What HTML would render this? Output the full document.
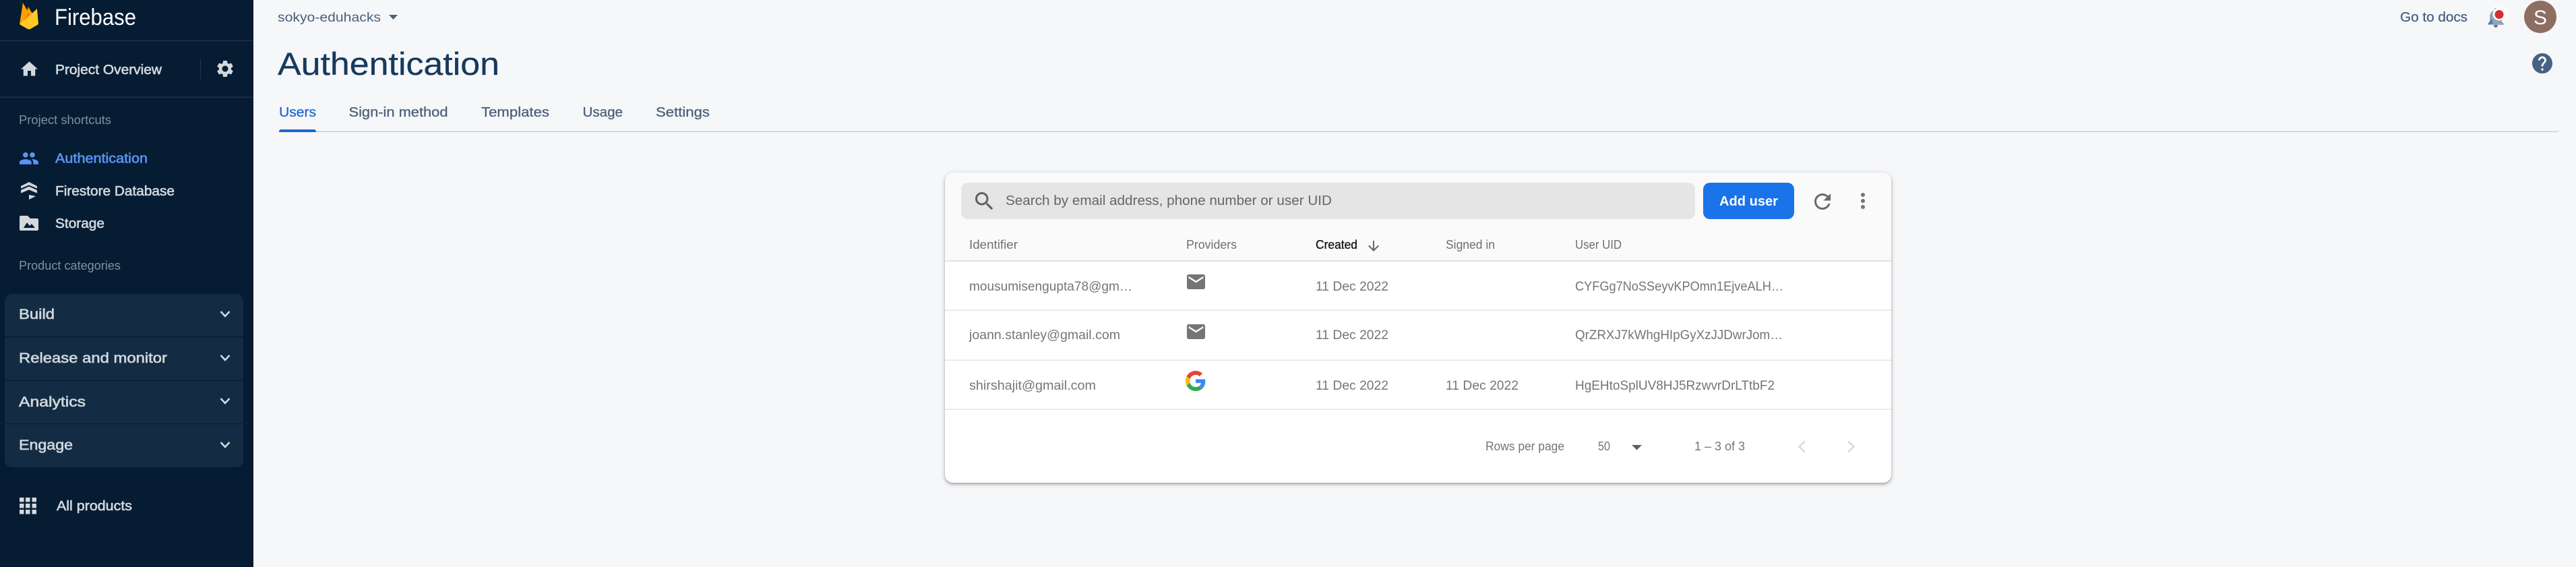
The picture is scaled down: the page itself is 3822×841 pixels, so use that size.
<!DOCTYPE html>
<html lang="en">
<head>
<meta charset="utf-8">
<title>Authentication - Firebase</title>
<style>
html,body{margin:0;padding:0;width:3822px;height:841px;overflow:hidden;background:#f6f7f9}
#card{position:absolute;left:1402px;top:256px;width:1404px;height:460px;background:#fff;border-radius:12px;box-shadow:0 2px 3px rgba(60,64,67,.35),0 2px 6px 2px rgba(60,64,67,.13)}
#head{position:absolute;left:0;top:0;width:100%;height:130px;background:#fafafa;border-radius:12px 12px 0 0;border-bottom:2px solid #e2e2e2}
svg{position:absolute;left:0;top:0}
text{font-family:"Liberation Sans",Arial,sans-serif;white-space:pre}
.m{stroke-width:.6px;paint-order:stroke}
.side{fill:#d3d8dd;stroke:#d3d8dd;font-size:20.5px}
.cat{fill:#82909e;font-size:18px}
.tab{fill:#4a6079;stroke:#4a6079;font-size:20px;stroke-width:.3px}
.th{fill:#6f6f6f;font-size:18px}
.td{fill:#757575;font-size:19.5px}
</style>
</head>
<body>
<div id="card"><div id="head"></div></div>
<svg width="3822" height="841" viewBox="0 0 3822 841" xmlns="http://www.w3.org/2000/svg">
<!-- sidebar -->
<rect x="0" y="0" width="376" height="841" fill="#051c33"/>
<rect x="0" y="59.5" width="376" height="1.5" fill="#1a3148"/>
<rect x="0" y="143.5" width="376" height="1.5" fill="#1a3148"/>
<rect x="297" y="88" width="1" height="30" fill="#1f364d"/>

<!-- logo -->
<path d="M29 36 L34 4 L43 20 L38 30 Z" fill="#ffa000"/>
<path d="M36 30 L42 10 L49 22 L42 30 Z" fill="#ffa000"/>
<path d="M34 33 L42 18 L46 24 L40 32 Z" fill="#f57c00"/>
<path d="M29 36 L55 13 L57 36 L45 43 Q43 44 41 43 Z" fill="#ffca28"/>
<text x="81" y="37" font-size="34" fill="#fff" textLength="121" lengthAdjust="spacingAndGlyphs">Firebase</text>

<!-- overview -->
<path transform="translate(28.5 87.5) scale(1.25)" d="M10 20v-6h4v6h5v-8h3L12 3 2 12h3v8z" fill="#d3d8dd"/>
<text class="m side" x="82" y="110" textLength="158" lengthAdjust="spacingAndGlyphs">Project Overview</text>
<path transform="translate(319 87) scale(1.25)" fill="#d3d8dd" d="M19.14 12.94c.04-.3.06-.61.06-.94 0-.32-.02-.64-.07-.94l2.03-1.58c.18-.14.23-.41.12-.61l-1.92-3.32c-.12-.22-.37-.29-.59-.22l-2.39.96c-.5-.38-1.03-.7-1.62-.94l-.36-2.54c-.04-.24-.24-.41-.48-.41h-3.84c-.24 0-.43.17-.47.41l-.36 2.54c-.59.24-1.13.57-1.62.94l-2.39-.96c-.22-.08-.47 0-.59.22L2.74 8.87c-.12.21-.08.47.12.61l2.03 1.58c-.05.3-.09.63-.09.94s.02.64.07.94l-2.03 1.58c-.18.14-.23.41-.12.61l1.92 3.32c.12.22.37.29.59.22l2.39-.96c.5.38 1.03.7 1.62.94l.36 2.54c.05.24.24.41.48.41h3.84c.24 0 .44-.17.47-.41l.36-2.54c.59-.24 1.13-.56 1.62-.94l2.39.96c.22.08.47 0 .59-.22l1.92-3.32c.12-.22.07-.47-.12-.61l-2.01-1.58zM12 15.6c-1.98 0-3.6-1.62-3.6-3.6s1.62-3.6 3.6-3.6 3.6 1.62 3.6 3.6-1.62 3.6-3.6 3.6z"/>

<text class="cat" x="28" y="184" textLength="137" lengthAdjust="spacingAndGlyphs">Project shortcuts</text>

<!-- shortcuts -->
<path transform="translate(27.7 219.6) scale(1.27)" fill="#5a94f5" d="M16 11c1.66 0 2.99-1.34 2.99-3S17.66 5 16 5c-1.66 0-3 1.34-3 3s1.34 3 3 3zm-8 0c1.66 0 2.99-1.34 2.99-3S9.66 5 8 5C6.34 5 5 6.34 5 8s1.34 3 3 3zm0 2c-2.33 0-7 1.17-7 3.5V19h14v-2.5c0-2.33-4.67-3.5-7-3.5zm8 0c-.29 0-.62.02-.97.05 1.16.84 1.97 1.97 1.97 3.45V19h6v-2.5c0-2.33-4.67-3.5-7-3.5z"/>
<text class="m side" x="82" y="241.5" textLength="137" lengthAdjust="spacingAndGlyphs" style="fill:#5a94f5;stroke:#5a94f5">Authentication</text>

<path d="M31 276 L43 270 L55 276 V279.5 L43 274.5 L31 279.5 Z" fill="#d3d8dd"/>
<path d="M31 282 L43 276.5 L55 282 V286.5 L43 281.5 L31 286.5 Z" fill="#d3d8dd"/>
<path d="M43 289 L53 291 L43 296 Z" fill="#d3d8dd"/>
<text class="m side" x="82" y="290" textLength="177" lengthAdjust="spacingAndGlyphs">Firestore Database</text>

<path d="M31 320 H41 L45 324 H55 a2 2 0 0 1 2 2 V340 a2 2 0 0 1-2 2 H31 a2 2 0 0 1-2-2 V322 a2 2 0 0 1 2-2Z M35 338 H52 L47 332 L44 335 L40 330 Z" fill="#d3d8dd" fill-rule="evenodd"/>
<text class="m side" x="82" y="338" textLength="73" lengthAdjust="spacingAndGlyphs">Storage</text>

<text class="cat" x="28" y="400" textLength="151" lengthAdjust="spacingAndGlyphs">Product categories</text>

<!-- categories panel -->
<rect x="7" y="436" width="354" height="257" rx="11" fill="#132c44"/>
<rect x="7" y="499" width="354" height="1.2" fill="#051c33"/>
<rect x="7" y="564" width="354" height="1.2" fill="#051c33"/>
<rect x="7" y="628" width="354" height="1.2" fill="#051c33"/>
<text class="m side" x="28" y="473" style="font-size:21px" textLength="53" lengthAdjust="spacingAndGlyphs">Build</text>
<text class="m side" x="28" y="538" style="font-size:21px" textLength="220" lengthAdjust="spacingAndGlyphs">Release and monitor</text>
<text class="m side" x="28" y="603" style="font-size:21px" textLength="99" lengthAdjust="spacingAndGlyphs">Analytics</text>
<text class="m side" x="28" y="667" style="font-size:21px" textLength="80" lengthAdjust="spacingAndGlyphs">Engage</text>
<g fill="none" stroke="#d3d8dd" stroke-width="2.6">
<path d="M327.5 462 L334 469 L340.5 462"/>
<path d="M327.5 527 L334 534 L340.5 527"/>
<path d="M327.5 591 L334 598 L340.5 591"/>
<path d="M327.5 656 L334 663 L340.5 656"/>
</g>

<!-- all products -->
<g fill="#d3d8dd">
<rect x="29" y="738" width="6.5" height="6.5"/><rect x="38" y="738" width="6.5" height="6.5"/><rect x="47.5" y="738" width="6.5" height="6.5"/>
<rect x="29" y="747" width="6.5" height="6.5"/><rect x="38" y="747" width="6.5" height="6.5"/><rect x="47.5" y="747" width="6.5" height="6.5"/>
<rect x="29" y="756" width="6.5" height="6.5"/><rect x="38" y="756" width="6.5" height="6.5"/><rect x="47.5" y="756" width="6.5" height="6.5"/>
</g>
<text class="m side" x="84" y="757" textLength="112" lengthAdjust="spacingAndGlyphs">All products</text>

<!-- top bar -->
<text x="412" y="32" font-size="19.5" fill="#4a6079" textLength="153" lengthAdjust="spacingAndGlyphs">sokyo-eduhacks</text>
<path d="M577 22 H590 L583.5 29 Z" fill="#4a6079"/>
<text x="412" y="111" font-size="47" fill="#173a5e" stroke="#173a5e" stroke-width=".3" textLength="329" lengthAdjust="spacingAndGlyphs">Authentication</text>

<text class="tab" x="414" y="173" style="fill:#1c68d4;stroke:#1c68d4" textLength="55" lengthAdjust="spacingAndGlyphs">Users</text>
<text class="tab" x="517.5" y="173" textLength="147" lengthAdjust="spacingAndGlyphs">Sign-in method</text>
<text class="tab" x="714" y="173" textLength="101" lengthAdjust="spacingAndGlyphs">Templates</text>
<text class="tab" x="864.5" y="173" textLength="59.5" lengthAdjust="spacingAndGlyphs">Usage</text>
<text class="tab" x="973" y="173" textLength="80" lengthAdjust="spacingAndGlyphs">Settings</text>
<rect x="414" y="194.5" width="3382" height="1.5" fill="#c5ced8"/>
<path d="M414 196 V195 a3 3 0 0 1 3-3 H466 a3 3 0 0 1 3 3 V196 Z" fill="#1a67d2"/>

<!-- top right -->
<text class="m" x="3561" y="32" font-size="20" fill="#456285" stroke="#456285" style="stroke-width:.3px" textLength="100" lengthAdjust="spacingAndGlyphs">Go to docs</text>
<circle cx="3708" cy="21" r="14.5" fill="#fff" opacity=".55"/>
<path transform="translate(3685 8.25) scale(1.5)" fill="#8fa4bb" d="M12 22c1.1 0 2-.9 2-2h-4c0 1.1.9 2 2 2zm6-6v-5c0-3.07-1.63-5.64-4.5-6.32V4c0-.83-.67-1.5-1.5-1.5s-1.5.67-1.5 1.5v.68C7.64 5.36 6 7.92 6 11v5l-2 2v1h16v-1l-2-2z"/>
<path d="M3691 35.5 L3697 28 L3699 35.5 Z" fill="#5e7a9a"/>
<path d="M3699.5 37 H3706.5 L3703 40.5 Z" fill="#4a6a92"/>
<circle cx="3708" cy="21" r="9.5" fill="#fff"/>
<circle cx="3708" cy="21.5" r="6.5" fill="#d32f2f"/>
<circle cx="3769" cy="25" r="24" fill="#8d6e63"/>
<text x="3769" y="36" font-size="30" fill="#fff" text-anchor="middle">S</text>
<path transform="translate(3754 76) scale(1.5)" fill="#456285" d="M12 2C6.48 2 2 6.48 2 12s4.48 10 10 10 10-4.48 10-10S17.52 2 12 2zm1 17h-2v-2h2v2zm2.07-7.75l-.9.92C13.45 12.9 13 13.5 13 15h-2v-.5c0-1.1.45-2.1 1.17-2.83l1.24-1.26c.37-.36.59-.86.59-1.41 0-1.1-.9-2-2-2s-2 .9-2 2H8c0-2.21 1.79-4 4-4s4 1.79 4 4c0 .88-.36 1.68-.93 2.25z"/>

<!-- toolbar -->
<rect x="1426" y="271" width="1089" height="54" rx="10" fill="#e5e5e5"/>
<path transform="translate(1442.5 280.5) scale(1.5)" fill="#616161" d="M15.5 14h-.79l-.28-.27C15.41 12.59 16 11.11 16 9.5 16 5.91 13.09 3 9.5 3S3 5.91 3 9.5 5.91 16 9.5 16c1.61 0 3.09-.59 4.23-1.57l.27.28v.79l5 4.99L20.49 19l-4.99-5zm-6 0C7.01 14 5 11.99 5 9.5S7.01 5 9.5 5 14 7.01 14 9.5 11.99 14 9.5 14z"/>
<text x="1492" y="304" font-size="20" fill="#666" textLength="484" lengthAdjust="spacingAndGlyphs">Search by email address, phone number or user UID</text>
<rect x="2527" y="271" width="135" height="54" rx="10" fill="#1a73e8"/>
<text x="2551" y="305" font-size="20" font-weight="700" fill="#fff" textLength="87" lengthAdjust="spacingAndGlyphs">Add user</text>
<path transform="translate(2686 281) scale(1.5)" fill="#6a6a6a" d="M17.65 6.35C16.2 4.9 14.21 4 12 4c-4.42 0-7.99 3.58-7.99 8s3.57 8 7.99 8c3.73 0 6.84-2.55 7.73-6h-2.08c-.82 2.33-3.04 4-5.65 4-3.31 0-6-2.69-6-6s2.69-6 6-6c1.66 0 3.14.69 4.22 1.78L13 11h7V4l-2.35 2.35z"/>
<circle cx="2764" cy="289" r="3" fill="#757575"/><circle cx="2764" cy="298" r="3" fill="#757575"/><circle cx="2764" cy="307" r="3" fill="#757575"/>

<!-- table header -->
<text class="th" x="1438" y="369" textLength="72" lengthAdjust="spacingAndGlyphs">Identifier</text>
<text class="th" x="1760" y="369" textLength="75" lengthAdjust="spacingAndGlyphs">Providers</text>
<text class="th m" x="1952" y="369" stroke="#111" style="fill:#111;stroke-width:.3px" textLength="62" lengthAdjust="spacingAndGlyphs">Created</text>
<path transform="translate(2026 353)" fill="#666" d="M20 12l-1.41-1.41L13 16.17V4h-2v12.17l-5.58-5.59L4 12l8 8 8-8z"/>
<text class="th" x="2145" y="369" textLength="73" lengthAdjust="spacingAndGlyphs">Signed in</text>
<text class="th" x="2337" y="369" textLength="69" lengthAdjust="spacingAndGlyphs">User UID</text>

<!-- rows -->
<rect x="1402" y="459.5" width="1404" height="1.5" fill="#e4e4e4"/>
<rect x="1402" y="533.5" width="1404" height="1.5" fill="#e4e4e4"/>
<rect x="1402" y="606.5" width="1404" height="1.5" fill="#e4e4e4"/>

<text class="td" x="1438" y="431" textLength="242" lengthAdjust="spacingAndGlyphs">mousumisengupta78@gm…</text>
<path transform="matrix(1.35 0 0 1.375 1758.3 401.5)" fill="#757575" d="M20 4H4c-1.1 0-1.99.9-1.99 2L2 18c0 1.1.9 2 2 2h16c1.1 0 2-.9 2-2V6c0-1.1-.9-2-2-2zm0 4l-8 5-8-5V6l8 5 8-5v2z"/>
<text class="td" x="1952" y="431" textLength="108" lengthAdjust="spacingAndGlyphs">11 Dec 2022</text>
<text class="td" x="2337" y="431" textLength="309" lengthAdjust="spacingAndGlyphs">CYFGg7NoSSeyvKPOmn1EjveALH…</text>

<text class="td" x="1438" y="503" textLength="224" lengthAdjust="spacingAndGlyphs">joann.stanley@gmail.com</text>
<path transform="matrix(1.35 0 0 1.375 1758.3 475.5)" fill="#757575" d="M20 4H4c-1.1 0-1.99.9-1.99 2L2 18c0 1.1.9 2 2 2h16c1.1 0 2-.9 2-2V6c0-1.1-.9-2-2-2zm0 4l-8 5-8-5V6l8 5 8-5v2z"/>
<text class="td" x="1952" y="503" textLength="108" lengthAdjust="spacingAndGlyphs">11 Dec 2022</text>
<text class="td" x="2337" y="503" textLength="308" lengthAdjust="spacingAndGlyphs">QrZRXJ7kWhgHIpGyXzJJDwrJom…</text>

<text class="td" x="1438" y="578" textLength="188" lengthAdjust="spacingAndGlyphs">shirshajit@gmail.com</text>
<g transform="translate(1759 550) scale(.625)">
<path fill="#EA4335" d="M24 9.5c3.54 0 6.71 1.22 9.21 3.6l6.85-6.85C35.9 2.38 30.47 0 24 0 14.62 0 6.51 5.38 2.56 13.22l7.98 6.19C12.43 13.72 17.74 9.5 24 9.5z"/>
<path fill="#4285F4" d="M46.98 24.55c0-1.57-.15-3.09-.38-4.55H24v9.02h12.94c-.58 2.96-2.26 5.48-4.78 7.18l7.73 6c4.51-4.18 7.09-10.36 7.09-17.65z"/>
<path fill="#FBBC05" d="M10.53 28.59c-.5-1.45-.78-2.99-.78-4.59s.27-3.14.78-4.59l-7.98-6.19C.92 16.46 0 20.12 0 24c0 3.88.92 7.54 2.56 10.78l7.97-6.19z"/>
<path fill="#34A853" d="M24 48c6.48 0 11.93-2.13 15.89-5.81l-7.73-6c-2.15 1.45-4.92 2.3-8.16 2.3-6.26 0-11.57-4.22-13.47-9.91l-7.98 6.19C6.51 42.62 14.62 48 24 48z"/>
</g>
<text class="td" x="1952" y="578" textLength="108" lengthAdjust="spacingAndGlyphs">11 Dec 2022</text>
<text class="td" x="2145" y="578" textLength="108" lengthAdjust="spacingAndGlyphs">11 Dec 2022</text>
<text class="td" x="2337" y="578" textLength="296" lengthAdjust="spacingAndGlyphs">HgEHtoSplUV8HJ5RzwvrDrLTtbF2</text>

<!-- footer -->
<text class="th" x="2204" y="668" style="fill:#757575" textLength="117" lengthAdjust="spacingAndGlyphs">Rows per page</text>
<text class="th" x="2371" y="668" style="fill:#757575" textLength="18" lengthAdjust="spacingAndGlyphs">50</text>
<path d="M2421 660 H2436 L2428.5 667.5 Z" fill="#616161"/>
<text class="th" x="2514" y="668" style="fill:#757575" textLength="75" lengthAdjust="spacingAndGlyphs">1 – 3 of 3</text>
<path d="M2678 654.5 L2669.5 662.5 L2678 670.5" fill="none" stroke="#d9d9d9" stroke-width="2.5"/>
<path d="M2742 654.5 L2750.5 662.5 L2742 670.5" fill="none" stroke="#d9d9d9" stroke-width="2.5"/>
</svg>
</body>
</html>
